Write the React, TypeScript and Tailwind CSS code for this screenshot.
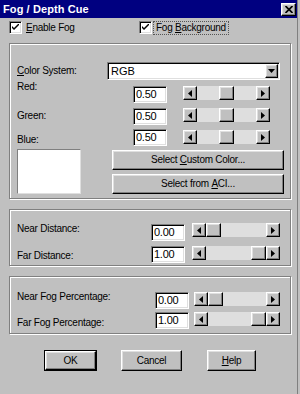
import React from "react";

const raised =
  "bg-[#c0c0c0] border border-t-white border-l-white border-b-black border-r-black shadow-[inset_-1px_-1px_0_#808080,inset_1px_1px_0_#dfdfdf]";
const sunken =
  "bg-white border border-t-[#808080] border-l-[#808080] border-b-white border-r-white shadow-[inset_1px_1px_0_#000,inset_-1px_-1px_0_#dfdfdf]";
const etched =
  "border border-[#808080] shadow-[inset_1px_1px_0_#fff,1px_1px_0_#fff]";

function ArrowLeft() {
  return (
    <svg width="4" height="7" viewBox="0 0 4 7">
      <path d="M4 0 L0 3.5 L4 7 Z" fill="#000" />
    </svg>
  );
}
function ArrowRight() {
  return (
    <svg width="4" height="7" viewBox="0 0 4 7">
      <path d="M0 0 L4 3.5 L0 7 Z" fill="#000" />
    </svg>
  );
}
function ArrowDown() {
  return (
    <svg width="7" height="4" viewBox="0 0 7 4">
      <path d="M0 0 L7 0 L3.5 4 Z" fill="#000" />
    </svg>
  );
}

function Scroll({ className, pos }: { className: string; pos: "start" | "mid" | "end" }) {
  const justify =
    pos === "start" ? "justify-start" : pos === "end" ? "justify-end" : "justify-center";
  return (
    <div className={"flex h-[14px] bg-[#dedede] " + className}>
      <div className={"w-[14px] h-full flex items-center justify-center " + raised}>
        <ArrowLeft />
      </div>
      <div className={"flex-1 flex " + justify}>
        <div className={"w-[15px] h-full " + raised} />
      </div>
      <div className={"w-[14px] h-full flex items-center justify-center " + raised}>
        <ArrowRight />
      </div>
    </div>
  );
}

function Edit({ value }: { value: string }) {
  return (
    <div
      className={
        "w-[34px] h-[17px] shrink-0 flex items-center pl-[2px] text-[11px] leading-none " + sunken
      }
    >
      {value}
    </div>
  );
}

function Check() {
  return (
    <div className={"w-[13px] h-[13px] shrink-0 flex items-center justify-center " + sunken}>
      <svg width="7" height="7" viewBox="0 0 7 7">
        <path d="M0 2 L0 4 L2 6 L7 1 L7 -1 L2 4 Z" fill="#000" />
      </svg>
    </div>
  );
}

export default function App() {
  return (
    <div
      className="w-[300px] h-[394px] bg-[#c0c0c0] overflow-hidden flex text-black text-[10px] tracking-[-0.25px]"
      style={{ fontFamily: '"Liberation Sans", Arial, sans-serif' }}
    >
      <div className="w-[297px] flex flex-col">
        {/* Title bar */}
        <div className="h-[18px] bg-[#000080] flex items-center justify-between pl-[3px] pr-[1px]">
          <span className="text-white font-bold text-[11px] tracking-[0.1px] leading-none">
            Fog / Depth Cue
          </span>
          <div className={"w-[15px] h-[13px] flex items-center justify-center " + raised}>
            <svg width="8" height="7" viewBox="0 0 8 7">
              <path d="M0.5 0 L7.5 7 M7.5 0 L0.5 7" stroke="#000" strokeWidth="1.7" />
            </svg>
          </div>
        </div>

        {/* Checkbox row */}
        <div className="mt-[3px] h-[13px] flex items-center pl-[9px]">
          <div className="w-[130px] flex items-center">
            <Check />
            <span className="ml-[4px] leading-[12px]">
              <span className="underline">E</span>nable Fog
            </span>
          </div>
          <Check />
          <span className="ml-[1px] px-[2px] border border-dotted border-[#555] leading-[12px]">
            Fog <span className="underline">B</span>ackground
          </span>
        </div>

        {/* Group 1 */}
        <div className={"mt-[9px] ml-[9px] w-[282px] h-[156px] pt-[18px] pl-[7px] flex flex-col " + etched}>
          <div className="flex items-center h-[18px]">
            <span className="w-[90px] leading-[12px]">
              <span className="underline">C</span>olor System:
            </span>
            <div className={"w-[173px] h-[18px] flex items-center justify-between pl-[3px] pr-[1px] " + sunken}>
              <span className="text-[11px] leading-none tracking-[0px]">RGB</span>
              <div className={"w-[13px] h-[14px] flex items-center justify-center " + raised}>
                <ArrowDown />
              </div>
            </div>
          </div>

          <div className="mt-[6px] flex items-start h-[17px]">
            <span className="w-[116px] leading-[12px] -mt-[5px]">Red:</span>
            <Edit value="0.50" />
            <Scroll className="ml-[16px] w-[87px]" pos="mid" />
          </div>

          <div className="mt-[5px] flex items-start h-[17px]">
            <span className="w-[116px] leading-[12px] mt-[2px]">Green:</span>
            <Edit value="0.50" />
            <Scroll className="ml-[16px] w-[87px]" pos="mid" />
          </div>

          <div className="mt-[4px] flex items-start h-[17px]">
            <span className="w-[116px] leading-[12px] mt-[5px]">Blue:</span>
            <Edit value="0.50" />
            <Scroll className="ml-[16px] w-[87px] mt-[1px]" pos="mid" />
          </div>

          <div className="mt-[3px] flex items-start">
            <div className="w-[64px] h-[45px] bg-white border border-t-[#808080] border-l-[#808080] border-b-[#dfdfdf] border-r-[#dfdfdf]" />
            <div className="ml-[31px] mt-[1px] flex flex-col gap-[4px]">
              <div className={"w-[172px] h-[20px] flex items-center justify-center leading-none " + raised}>
                Select&nbsp;<span className="underline">C</span>ustom Color...
              </div>
              <div className={"w-[172px] h-[20px] flex items-center justify-center leading-none " + raised}>
                Select from&nbsp;<span className="underline">A</span>CI...
              </div>
            </div>
          </div>
        </div>

        {/* Group 2 */}
        <div className={"mt-[10px] ml-[9px] w-[282px] h-[57px] pt-[14px] pl-[7px] flex flex-col " + etched}>
          <div className="flex items-start h-[17px]">
            <span className="w-[134px] leading-[12px] -mt-[1px]">Near Distance:</span>
            <Edit value="0.00" />
            <Scroll className="ml-[7px] w-[88px] -mt-[1px]" pos="start" />
          </div>
          <div className="mt-[5px] flex items-start h-[17px]">
            <span className="w-[134px] leading-[12px] mt-[4px]">Far Distance:</span>
            <Edit value="1.00" />
            <Scroll className="ml-[7px] w-[88px]" pos="end" />
          </div>
        </div>

        {/* Group 3 */}
        <div className={"mt-[10px] ml-[9px] w-[282px] h-[58px] pt-[15px] pl-[7px] flex flex-col " + etched}>
          <div className="flex items-start h-[17px]">
            <span className="w-[138px] leading-[12px] -mt-[1px]">Near Fog Percentage:</span>
            <Edit value="0.00" />
            <Scroll className="ml-[5px] w-[86px]" pos="start" />
          </div>
          <div className="mt-[3px] flex items-start h-[17px]">
            <span className="w-[138px] leading-[12px] mt-[5px]">Far Fog Percentage:</span>
            <Edit value="1.00" />
            <Scroll className="ml-[5px] w-[86px]" pos="end" />
          </div>
        </div>

        {/* Buttons */}
        <div className="mt-[16px] flex pl-[44px]">
          <div className="w-[53px] h-[21px] border border-black">
            <div className={"w-full h-full flex items-center justify-center leading-none " + raised}>
              OK
            </div>
          </div>
          <div className={"ml-[24px] w-[61px] h-[21px] flex items-center justify-center leading-none " + raised}>
            Cancel
          </div>
          <div className={"ml-[25px] w-[49px] h-[21px] flex items-center justify-center leading-none " + raised}>
            <span className="underline">H</span>elp
          </div>
        </div>
      </div>
      <div className="w-[3px] h-full border-l border-[#808080]" />
    </div>
  );
}
